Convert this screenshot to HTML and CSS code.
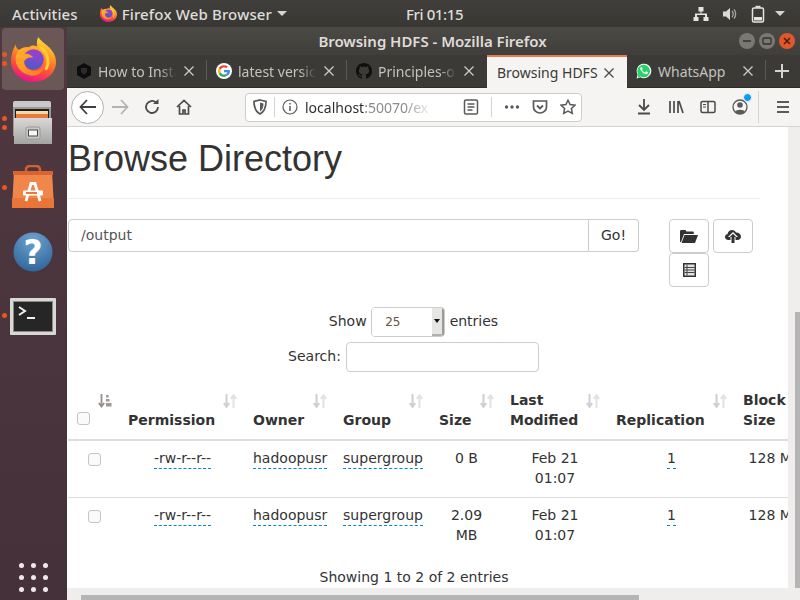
FILE: index.html
```html
<!DOCTYPE html>
<html lang="en">
<head>
<meta charset="utf-8">
<title>Browsing HDFS</title>
<link rel="stylesheet" href="styles.css">
</head>
<body>
<svg class="defs" width="0" height="0" aria-hidden="true">
  <defs>
    <linearGradient id="ffBody" x1="0.75" y1="0" x2="0.42" y2="1">
      <stop offset="0" stop-color="#ffe23c"/><stop offset="0.38" stop-color="#ff9a20"/><stop offset="0.72" stop-color="#ff4a3e"/><stop offset="1" stop-color="#e4178c"/>
    </linearGradient>
    <linearGradient id="ffGlobe" x1="0.6" y1="0" x2="0.4" y2="1">
      <stop offset="0" stop-color="#a23ccf"/><stop offset="1" stop-color="#4a5cc9"/>
    </linearGradient>
    <linearGradient id="ffFox" x1="0" y1="0" x2="1" y2="1">
      <stop offset="0" stop-color="#ffb62c"/><stop offset="1" stop-color="#ff7a22"/>
    </linearGradient>
    <symbol id="firefox" viewBox="0 0 48 48">
      <path fill="url(#ffBody)" d="M5 8C5 11 7 13 9 14 12 11 16 10 19 11 22 8 25 9 28 10 27 6 28 3 29 0 33 6 40 9 44 15 47 19 48 23 48 27 48 39 37 48 24 48 11 48 0 38 0 26 0 19 2 13 5 8Z"/>
      <path fill="none" stroke="#ffcf35" stroke-width="3" d="M31 11C39 16 42 26 37 35"/>
      <circle cx="24" cy="24" r="11" fill="url(#ffGlobe)"/>
      <path fill="url(#ffFox)" d="M8 14C12 11 17 11 21 13 17 14 15 16 14 18 18 17 22 19 24 22 19 21 15 23 14 26 14 31 18 36 25 36 30 36 33 34 35 32 33 39 27 42 21 41 10 39 4 30 5 21 6 18 7 16 8 14Z"/>
    </symbol>
    <g id="sortOff"><path d="M3.500 0v12.500M.8 9l2.700 3.800L6.200 9" fill="none" stroke="#cfcfcf" stroke-width="2"/><path d="M10.500 14V1.500M7.800 5l2.700-3.800L13.200 5" fill="none" stroke="#e2e2e2" stroke-width="2"/></g>
  </defs>
</svg>
<header class="topbar">
  <span class="top-item activities">Activities</span>
  <svg class="top-ff" width="17" height="17"><use href="#firefox"/></svg>
  <span class="top-item app-name">Firefox Web Browser</span>
  <span class="caret"></span>
  <span class="clock">Fri 01:15</span>
  <div class="status">
    <svg width="16" height="16" viewBox="0 0 16 16" fill="#e6e4e0"><path d="M5.500 1h5v4.500h-2V7.500H14V11h1.500v4h-5v-4H12V9H4v2h1.500v4h-5v-4H2V7.500h5.500V5.500h-2z"/></svg>
    <svg width="16" height="16" viewBox="0 0 16 16" fill="#dcdad6"><path d="M1 5.500h3L8 2v12L4 10.500H1z"/><path fill="none" stroke="#a9a7a3" stroke-width="1.300" d="M10 5c1.400 1.700 1.400 4.300 0 6M12 3.500c2.200 2.500 2.200 6.500 0 9"/></svg>
    <svg width="14" height="18" viewBox="0 0 14 18"><rect x="1.500" y="3" width="11" height="14" rx="1.500" fill="none" stroke="#e6e4e0" stroke-width="1.500"/><rect x="4.500" y="0.800" width="5" height="2" fill="#e6e4e0"/><rect x="3" y="12" width="8" height="3.500" fill="#e6e4e0"/></svg>
    <span class="caret"></span>
  </div>
</header>
<div class="desktop">
  <nav class="dock">
    <div class="dock-item dock-active">
      <span class="dot dot-a"></span><span class="dot dot-b"></span>
      <svg width="45" height="45"><use href="#firefox"/></svg>
    </div>
    <div class="dock-item dock-files">
      <span class="dot dot-a"></span><span class="dot dot-b"></span>
      <svg width="40" height="43" viewBox="0 0 40 43">
        <defs><linearGradient id="cabFront" x1="0" y1="0" x2="0" y2="1"><stop offset="0" stop-color="#d8d8d6"/><stop offset="1" stop-color="#a4a4a2"/></linearGradient></defs>
        <path d="M1 2C1 1 2 0 3 0H37C38 0 39 1 39 2V35H1Z" fill="#9a9a98"/>
        <path d="M1 2C1 1 2 0 3 0H37C38 0 39 1 39 2V6H1Z" fill="#c9c9c7"/>
        <rect x="3" y="8" width="34" height="10" fill="#1f1d1b"/>
        <rect x="4" y="10" width="32" height="3" fill="#f6d9a8"/>
        <rect x="4" y="13" width="32" height="5" fill="#ea7a3c"/>
        <rect x="2" y="17" width="38" height="26" fill="url(#cabFront)"/>
        <rect x="14" y="26" width="14" height="12" rx="2" fill="#c8c8c6" stroke="#9a9a98"/>
        <rect x="16.500" y="29" width="9" height="6" fill="#f6f6f4" stroke="#4a4a48"/>
      </svg>
    </div>
    <div class="dock-item dock-bag">
      <span class="dot dot-a"></span>
      <svg width="42" height="43" viewBox="0 0 42 43">
        <path d="M14 10V5C14 2 16 1 18 1H24C26 1 28 2 28 5V10" fill="none" stroke="#d4602f" stroke-width="2.500"/>
        <path d="M2 6H40L42 43H0Z" fill="#f0864a"/>
        <rect x="1" y="6" width="40" height="4" fill="#d9642e"/>
        <rect x="0" y="33" width="42" height="10" fill="#e97638"/>
        <path d="M14 36L19 18.500H23L28 36" fill="none" stroke="#fff" stroke-width="2.800"/>
        <rect x="11" y="25.500" width="20" height="5" rx="1" fill="#fff"/>
        <rect x="14" y="27" width="11" height="2" fill="#e9793e"/>
      </svg>
    </div>
    <div class="dock-item dock-help">
      <svg width="40" height="40" viewBox="0 0 40 40">
        <defs><radialGradient id="helpBlue" cx="0.5" cy="0.2" r="0.9"><stop offset="0" stop-color="#6ea3cf"/><stop offset="1" stop-color="#2a5f96"/></radialGradient></defs>
        <circle cx="20" cy="20" r="19.500" fill="url(#helpBlue)"/>
        <text class="help-mark" x="20" y="32" text-anchor="middle">?</text>
      </svg>
    </div>
    <div class="dock-item dock-term">
      <span class="dot dot-a"></span>
      <svg width="46" height="37" viewBox="0 0 46 37">
        <rect width="46" height="37" rx="1" fill="#d8d8d4"/>
        <rect x="3" y="3" width="40" height="31" fill="#8a8a88"/>
        <rect x="4" y="4" width="38" height="29" fill="#262626"/>
        <path d="M9 9l6 4-6 4" fill="none" stroke="#f0f0ee" stroke-width="2"/>
        <path d="M17 20h8" stroke="#f0f0ee" stroke-width="2"/>
      </svg>
    </div>
    <div class="app-grid">
      <i></i><i></i><i></i><i></i><i></i><i></i><i></i><i></i><i></i>
    </div>
  </nav>
  <main class="window">
    <div class="titlebar">
      <span class="title-text">Browsing HDFS - Mozilla Firefox</span>
      <div class="wm">
        <span class="wm-btn"><svg width="10" height="10" viewBox="0 0 10 10"><path d="M1 5h8" stroke="#34322e" stroke-width="1.500"/></svg></span>
        <span class="wm-btn"><svg width="10" height="10" viewBox="0 0 10 10"><rect x="1" y="2" width="8" height="6" rx="1" fill="none" stroke="#34322e" stroke-width="1.300"/></svg></span>
        <span class="wm-btn wm-close"><svg width="10" height="10" viewBox="0 0 10 10"><path d="M2 2l6 6M8 2l-6 6" stroke="#4a1d0c" stroke-width="1.500"/></svg></span>
      </div>
    </div>
    <div class="tabs">
      <div class="tab">
        <svg class="fav" width="16" height="16" viewBox="0 0 16 16"><path d="M8 0l7 4v8l-7 4-7-4V4z" fill="#0d0d0d"/><path d="M5 5h6v4l-3 3-3-3z" fill="#2b2b2b"/></svg>
        <span class="tab-label fade">How to Insta</span>
        <svg class="x" width="10" height="10" viewBox="0 0 10 10"><path d="M.5.500l9 9M9.500.500l-9 9"/></svg>
      </div>
      <div class="tab">
        <svg class="fav" width="16" height="16" viewBox="0 0 16 16"><circle cx="8" cy="8" r="8" fill="#fff"/><g transform="translate(-2.400 -2.400) scale(1.300)"><path d="M8 3.500a4.500 4.500 0 0 1 3 1.100l-1.200 1.200A2.800 2.800 0 0 0 5.400 7L3.900 5.900A4.500 4.500 0 0 1 8 3.500z" fill="#ea4335"/><path d="M3.900 5.900L5.400 7a2.800 2.800 0 0 0 0 2L3.900 10.100a4.500 4.500 0 0 1 0-4.200z" fill="#fbbc05"/><path d="M3.900 10.100L5.400 9a2.800 2.800 0 0 0 4 1.400l1.400 1.100A4.500 4.500 0 0 1 3.900 10.100z" fill="#34a853"/><path d="M12.500 7.200H8v1.700h2.600a2.200 2.200 0 0 1-1.200 1.500l1.400 1.100a4.500 4.500 0 0 0 1.700-4.300z" fill="#4285f4"/></g></svg>
        <span class="tab-label fade">latest versio</span>
        <svg class="x" width="10" height="10" viewBox="0 0 10 10"><path d="M.5.500l9 9M9.500.500l-9 9"/></svg>
      </div>
      <div class="tab">
        <svg class="fav" width="16" height="16" viewBox="0 0 16 16"><path fill="#0f0f0f" d="M8 0C3.580 0 0 3.580 0 8c0 3.540 2.290 6.530 5.470 7.590.4.070.55-.17.55-.38 0-.19-.01-.82-.01-1.490-2.010.37-2.530-.49-2.690-.94-.09-.23-.48-.94-.82-1.130-.28-.15-.68-.52-.01-.53.630-.01 1.080.58 1.230.82.720 1.210 1.870.87 2.330.66.070-.52.280-.87.510-1.070-1.780-.2-3.640-.89-3.640-3.950 0-.87.310-1.590.820-2.150-.08-.2-.36-1.020.08-2.120 0 0 .67-.21 2.200.82.640-.18 1.320-.27 2-.27s1.360.09 2 .27c1.530-1.040 2.200-.82 2.200-.82.440 1.100.160 1.920.080 2.120.51.560.82 1.270.82 2.150 0 3.070-1.870 3.750-3.650 3.950.29.250.54.730.54 1.480 0 1.070-.01 1.930-.01 2.200 0 .21.150.46.550.38A8.010 8.010 0 0 0 16 8c0-4.420-3.580-8-8-8z"/></svg>
        <span class="tab-label fade">Principles-o</span>
        <svg class="x" width="10" height="10" viewBox="0 0 10 10"><path d="M.5.500l9 9M9.500.500l-9 9"/></svg>
      </div>
      <div class="tab tab-active">
        <span class="tab-label">Browsing HDFS</span>
        <svg class="x" width="10" height="10" viewBox="0 0 10 10"><path d="M.5.500l9 9M9.500.500l-9 9"/></svg>
      </div>
      <div class="tab tab-last">
        <svg class="fav" width="16" height="16" viewBox="0 0 16 16"><path d="M.5 15.500l1.100-4A7.300 7.300 0 1 1 4.400 14.300z" fill="#fff"/><path d="M1.600 14.400l.8-2.900A6.300 6.300 0 1 1 4.700 13.600z" fill="#25d366"/><path d="M6 4.500c-.3-.6-.5-.6-.8-.6-.6 0-1.400.7-1.400 1.900 0 1.600 1.200 3.100 1.400 3.300.2.300 2.300 3.500 5.500 4 1.500.2 2.500-.7 2.700-1.500.1-.6.100-1 0-1.100-.1-.2-1.700-.9-2-1-.3-.1-.4 0-.6.200l-.8 1c-.2.100-.3.200-.6.100-1.500-.7-2.600-1.700-3.300-3-.1-.2 0-.4.100-.5l.5-.7c.1-.2.100-.3 0-.5z" fill="#fff" transform="translate(1.200 .8) scale(.8)"/></svg>
        <span class="tab-label">WhatsApp</span>
        <svg class="x" width="10" height="10" viewBox="0 0 10 10"><path d="M.5.500l9 9M9.500.500l-9 9"/></svg>
      </div>
      <svg class="plus" width="14" height="14" viewBox="0 0 14 14"><path d="M7 0v14M0 7h14" stroke="#d6d4d0" stroke-width="2"/></svg>
    </div>
    <div class="navbar">
      <span class="back"><svg width="18" height="16" viewBox="0 0 18 16"><path d="M8 1L1.500 8 8 15M2 8h15" fill="none" stroke="#3f3f3f" stroke-width="1.800"/></svg></span>
      <span class="nav-btn"><svg width="18" height="16" viewBox="0 0 18 16"><path d="M10 1l6.500 7L10 15M16 8H1" fill="none" stroke="#b3b3b1" stroke-width="1.800"/></svg></span>
      <span class="nav-btn"><svg width="16" height="16" viewBox="0 0 16 16"><path d="M14 8a6 6 0 1 1-2-4.500" fill="none" stroke="#4a4a48" stroke-width="1.800"/><path d="M9 5h5.500V0z" fill="#4a4a48"/></svg></span>
      <span class="nav-btn"><svg width="16" height="16" viewBox="0 0 16 16"><path d="M1 8l7-6.500L15 8M3.500 7v8h3.500v-4h2v4h3.500V7" fill="none" stroke="#4a4a48" stroke-width="1.700"/></svg></span>
      <div class="urlbar">
        <svg width="16" height="16" viewBox="0 0 16 16"><path d="M8 1l6 1.500c0 6-1.500 10-6 12.500C3.500 12.500 2 8.500 2 2.500z" fill="none" stroke="#5a5a58" stroke-width="1.700"/><path d="M8 3.500l3.500.9C11.500 8 10.500 10.500 8 12.500z" fill="#5a5a58"/></svg>
        <span class="url-sep"></span>
        <svg class="url-info" width="16" height="16" viewBox="0 0 16 16"><circle cx="8" cy="8" r="7" fill="none" stroke="#5a5a58" stroke-width="1.200"/><path d="M8 7v5M8 4v1.600" stroke="#5a5a58" stroke-width="1.500"/></svg>
        <span class="url-text fade-url"><b>localhost</b>:50070/ex</span>
        <svg class="url-reader" width="16" height="16" viewBox="0 0 16 16"><rect x="1.500" y="1" width="13" height="14" rx="1.500" fill="none" stroke="#5a5a58" stroke-width="1.500"/><path d="M4.500 5h7M4.500 8h7M4.500 11h5" stroke="#5a5a58" stroke-width="1.300"/></svg>
        <span class="url-sep url-sep2"></span>
        <svg class="url-icon" width="16" height="16" viewBox="0 0 16 16" fill="#5a5a58"><circle cx="2.500" cy="8" r="1.700"/><circle cx="8" cy="8" r="1.700"/><circle cx="13.500" cy="8" r="1.700"/></svg>
        <svg class="url-icon" width="16" height="16" viewBox="0 0 16 16"><path d="M1.500 2h13v6a6.500 6 0 0 1-13 0z" fill="none" stroke="#5a5a58" stroke-width="1.700"/><path d="M5 6.500L8 9.500l3-3" fill="none" stroke="#5a5a58" stroke-width="1.800"/></svg>
        <svg class="url-icon" width="16" height="16" viewBox="0 0 16 16"><path d="M8 1.200l2.100 4.400 4.800.6-3.500 3.300.9 4.800L8 12l-4.300 2.300.9-4.800L1.100 6.200l4.800-.6z" fill="none" stroke="#5a5a58" stroke-width="1.500"/></svg>
      </div>
      <span class="nav-btn nav-first"><svg width="16" height="16" viewBox="0 0 16 16"><path d="M8 0v10M3 6l5 5 5-5M2 14.500h12" fill="none" stroke="#4a4a48" stroke-width="1.800"/></svg></span>
      <span class="nav-btn"><svg width="16" height="16" viewBox="0 0 16 16"><path d="M2 2v12M6 2v12M10 2v12M11 2l4 12" fill="none" stroke="#4a4a48" stroke-width="1.700"/></svg></span>
      <span class="nav-btn"><svg width="16" height="16" viewBox="0 0 16 16"><rect x="1" y="2.500" width="14" height="11" rx="1.500" fill="none" stroke="#4a4a48" stroke-width="1.500"/><path d="M8 3v10" stroke="#4a4a48" stroke-width="1.500"/><path d="M3 5.500h3M3 8h3" stroke="#4a4a48" stroke-width="1.200"/></svg></span>
      <span class="nav-btn account"><svg width="16" height="16" viewBox="0 0 16 16"><circle cx="8" cy="8" r="7" fill="none" stroke="#5a5a58" stroke-width="1.300"/><circle cx="8" cy="6" r="2.800" fill="#5a5a58"/><path d="M3 13c1-3 9-3 10 0-2 2.500-8 2.500-10 0z" fill="#5a5a58"/></svg><span class="badge"></span></span>
      <span class="nav-sep"></span>
      <span class="nav-btn"><svg width="16" height="14" viewBox="0 0 16 14"><path d="M2 2h12M2 7h12M2 12h12" stroke="#5a5a58" stroke-width="2"/></svg></span>
    </div>
    <div class="viewport">
      <div class="page-scroll">
        <div class="page">
          <div class="page-header"><h1>Browse Directory</h1></div>
          <div class="toolbar">
            <div class="input-group">
              <input class="path-input" type="text" value="/output">
              <button class="go" type="button">Go!</button>
            </div>
            <div class="tools">
              <button class="tool" type="button"><svg width="18" height="14" viewBox="0 0 18 14" fill="#333"><path d="M0 13V2.500C0 1.500.5 1 1.500 1h4l1 1.500h6c1 0 1.300.5 1.300 1V5H4L1 13z"/><path d="M4.500 6H18l-3 8H1.500z"/></svg></button>
              <button class="tool" type="button"><svg width="16" height="14" viewBox="0 0 16 14" fill="#333"><path d="M3.500 11C1.500 11 0 9.700 0 8c0-1.500 1-2.600 2.500-3C3 2.500 5 1 7 1c1.800 0 3.300 1 4 2.500 2.700-.2 5 1.700 5 4.200 0 1.800-1.500 3.300-3.500 3.300H10.500V8H13L8 3 3 8h2.500v3z"/><path d="M6.500 14V8H4.800L8 4.700 11.200 8H9.500v6z"/></svg></button>
              <button class="tool" type="button"><svg width="13" height="14" viewBox="0 0 13 14"><rect width="13" height="14" fill="#333"/><rect x="1.500" y="1.500" width="10" height="11" fill="#e4e4e4"/><path d="M1.500 4.500h10M1.500 7h10M1.500 9.500h10M4 1.500v11" stroke="#444"/></svg></button>
            </div>
          </div>
          <div class="length-row">
            <label class="length-label show-label">Show
              <span class="select-wrap"><select class="length-select"><option>25</option></select><span class="select-arrow"></span></span>
              entries</label>
          </div>
          <div class="search-row"><label class="length-label search-label">Search: <input class="search-input" type="text"></label></div>
          <table class="files">
            <colgroup><col class="c1"><col class="c2"><col class="c3"><col class="c4"><col class="c5"><col class="c6"><col class="c7"><col class="c8"></colgroup>
            <thead>
              <tr>
                <th class="check-head"><span class="cb"></span><svg class="sort sort-on" width="14" height="14" viewBox="0 0 14 14"><path d="M3.500 0v12M.8 9l2.700 3.500L6.200 9" fill="none" stroke="#9a8f88" stroke-width="1.800"/><path d="M8 1h2.500v2.500H8zM8 5h3.500v2.500H8zM8 9h5.500v3.500H8z" fill="#9a9a98"/></svg></th>
                <th>Permission<svg class="sort" width="14" height="14" viewBox="0 0 14 14"><use href="#sortOff"/></svg></th>
                <th>Owner<svg class="sort" width="14" height="14" viewBox="0 0 14 14"><use href="#sortOff"/></svg></th>
                <th>Group<svg class="sort" width="14" height="14" viewBox="0 0 14 14"><use href="#sortOff"/></svg></th>
                <th>Size<svg class="sort" width="14" height="14" viewBox="0 0 14 14"><use href="#sortOff"/></svg></th>
                <th>Last Modified<svg class="sort" width="14" height="14" viewBox="0 0 14 14"><use href="#sortOff"/></svg></th>
                <th>Replication<svg class="sort" width="14" height="14" viewBox="0 0 14 14"><use href="#sortOff"/></svg></th>
                <th>Block Size</th>
              </tr>
            </thead>
            <tbody>
              <tr>
                <td class="check-cell"><span class="cb"></span></td>
                <td><span class="editable">-rw-r--r--</span></td>
                <td><span class="editable">hadoopusr</span></td>
                <td><span class="editable">supergroup</span></td>
                <td>0 B</td>
                <td>Feb 21 01:07</td>
                <td><span class="editable">1</span></td>
                <td>128 MB</td>
              </tr>
              <tr>
                <td class="check-cell"><span class="cb"></span></td>
                <td><span class="editable">-rw-r--r--</span></td>
                <td><span class="editable">hadoopusr</span></td>
                <td><span class="editable">supergroup</span></td>
                <td>2.09 MB</td>
                <td>Feb 21 01:07</td>
                <td><span class="editable">1</span></td>
                <td>128 MB</td>
              </tr>
            </tbody>
          </table>
          <div class="info">Showing 1 to 2 of 2 entries</div>
        </div>
      </div>
      <div class="vscroll"><span class="vthumb"></span></div>
      <div class="hscroll"><span class="hthumb"></span></div>
    </div>
  </main>
</div>
</body>
</html>
```
FILE: styles.css
```css
* { box-sizing: border-box; }
html, body { margin: 0; height: 100%; overflow: hidden; }
body { width: 800px; height: 600px; display: flex; flex-direction: column; font-family: "DejaVu Sans", sans-serif; color: #333; font-size: 14px; background: #fff; }
.defs { position: absolute; }

.topbar { height: 27px; flex: none; display: flex; align-items: center; padding-left: 12px; background: linear-gradient(#403f3b, #383733); color: #dfddd9; font-family: "Noto Sans", sans-serif; font-size: 15px; font-weight: 500; }
.top-item { white-space: nowrap; }
.activities { margin-right: 22px; letter-spacing: .1px; }
.app-name { letter-spacing: .15px; }
.top-ff { margin-right: 5px; }
.caret { display: inline-block; width: 0; height: 0; border-left: 5px solid transparent; border-right: 5px solid transparent; border-top: 5px solid #d8d6d2; margin-left: 5px; }
.clock { margin-left: 119px; white-space: nowrap; letter-spacing: -.4px; }
.status { margin-left: auto; display: flex; align-items: center; gap: 13px; padding-right: 15px; }
.status .caret { margin-left: -3px; }

.desktop { flex: 1; display: flex; min-height: 0; }
.dock { width: 67px; flex: none; background: linear-gradient(#503840, #45313a); display: flex; flex-direction: column; align-items: center; padding: 1px 0 8px; }
.dock-item { width: 62px; height: 62px; border-radius: 4px; display: flex; align-items: center; justify-content: center; position: relative; align-self: flex-start; margin-left: 2px; }
.dock-active { background: #6a5856; }
.dot { position: absolute; left: 0; width: 5px; height: 5px; border-radius: 50%; background: #e9561f; }
.dock-active .dot-a { top: 24px; left: 0; }
.dock-active .dot-b { top: 33px; left: 0; }
.dock-active svg { margin-left: 1px; }
.dock-files { height: 43px; margin-top: 11px; }
.dock-files svg { margin-right: 2px; }
.dock-files .dot-a { top: 15px; }
.dock-files .dot-b { top: 24px; }
.dock-bag { margin-top: 21px; height: 43px; }
.dock-bag .dot-a { top: 20px; }
.dock-help { margin-top: 24px; height: 40px; }
.help-mark { font-family: "DejaVu Sans", sans-serif; font-size: 33px; font-weight: 700; fill: #fff; }
.dock-term { margin-top: 26px; height: 37px; }
.dock-term .dot-a { top: 15px; }
.app-grid { margin-top: auto; display: grid; grid-template-columns: repeat(3, 5px); gap: 7px; }
.app-grid i { width: 5px; height: 5px; border-radius: 50%; background: #efeaea; }

.window { flex: 1; min-width: 0; display: flex; flex-direction: column; }
.titlebar { height: 28px; flex: none; display: flex; align-items: center; justify-content: center; position: relative; background: linear-gradient(#4c4a45, #403e3a); font-family: "Noto Sans", sans-serif; font-weight: 600; font-size: 15px; color: #dfdcd8; }
.title-text { margin-right: 2px; letter-spacing: -.03px; }
.wm { position: absolute; right: 0; top: 0; height: 100%; display: flex; align-items: center; gap: 4px; padding-right: 5px; }
.wm-btn { width: 16px; height: 16px; border-radius: 50%; background: #7a7873; display: flex; align-items: center; justify-content: center; }
.wm-close { background: #e0582a; }

.tabs { height: 33px; flex: none; display: flex; background: #3b3a36; font-family: "Noto Sans", sans-serif; font-size: 14px; color: #c5c2bd; align-items: stretch; border-bottom: 1px solid #2e2d2a; }
.tab { width: 140px; flex: none; display: flex; align-items: center; padding: 0 13px 0 9px; position: relative; }
.tab::after { content: ""; position: absolute; right: 0; top: 5px; bottom: 7px; width: 1px; background: #5c5a56; }
.tab-last { width: 139px; }
.fav { flex: none; margin-right: 6px; }
.tab-label { flex: 1; min-width: 0; white-space: nowrap; }
.fade { -webkit-mask-image: linear-gradient(to right, #000 80%, transparent 100%); mask-image: linear-gradient(to right, #000 80%, transparent 100%); }
.fade-url { -webkit-mask-image: linear-gradient(to right, #000 78%, transparent 100%); mask-image: linear-gradient(to right, #000 78%, transparent 100%); }
.x { flex: none; margin-left: 8px; }
.x path { fill: none; stroke: #cfccc7; stroke-width: 1.300; }
.tab-active { background: #f5f4f3; color: #3b3a36; border-top: 2px solid #e9794f; margin-bottom: -1px; padding-left: 10px; }
.tab-active .x path { stroke: #4a4a48; }
.tab-active::after, .tab:nth-child(3)::after { display: none; }
.plus { align-self: center; margin-left: 9px; }

.navbar { height: 39px; flex: none; display: flex; align-items: center; padding-left: 4px; background: #f5f4f3; border-bottom: 1px solid #d5d3d0; }
.back { width: 33px; height: 33px; border: 1px solid #b1b0ae; border-radius: 50%; background: #fff; display: flex; align-items: center; justify-content: center; flex: none; }
.nav-btn { width: 32px; height: 32px; flex: none; display: flex; align-items: center; justify-content: center; position: relative; }
.urlbar { width: 337px; height: 29px; margin-left: 45px; flex: none; background: #fff; border: 1px solid #cfcdca; border-radius: 4px; display: flex; align-items: center; padding-left: 6px; font-family: "Noto Sans", sans-serif; font-size: 14px; color: #8b8b8b; }
.url-sep { width: 1px; height: 20px; background: #d5d3d0; margin-left: 6px; flex: none; }
.url-info { margin-left: 7px; flex: none; }
.url-text { margin-left: 7px; width: 128px; white-space: nowrap; flex: none; }
.url-text b { font-weight: 400; color: #2e2e2e; }
.url-reader { margin-left: 30px; flex: none; }
.url-sep2 { margin-left: 12px; }
.url-icon { margin-left: 12px; flex: none; }
.nav-first { margin-left: 46px; }
.badge { position: absolute; right: 4px; top: 2px; width: 7px; height: 7px; border-radius: 50%; background: #0a9af0; border: 1px solid #f5f4f3; box-sizing: content-box; }
.nav-sep { width: 1px; height: 32px; background: #d5d3d0; margin: 0 8px 0 2px; flex: none; }

.viewport { flex: 1; min-height: 0; display: grid; grid-template-columns: 1fr 12px; grid-template-rows: 1fr 12px; background: #f0eeec; }
.page-scroll { overflow: hidden; background: #fff; padding-left: 1px; min-width: 0; min-height: 0; }
.vscroll { display: flex; justify-content: flex-end; padding-top: 185px; }
.vthumb { width: 5px; height: 276px; background: #b5b5b5; }
.hscroll { display: flex; align-items: flex-end; padding-left: 14px; grid-column: 1 / span 2; }
.hthumb { width: 558px; height: 5px; background: #b5b5b5; }

.page { width: 692px; }
.page-header { padding-top: 12px; padding-bottom: 9px; margin-bottom: 20px; border-bottom: 1px solid #eee; }
h1 { margin: 0 0 10px; font-family: "Liberation Sans", Arial, sans-serif; font-size: 36px; font-weight: 400; line-height: 40px; color: #333; }
.toolbar { display: flex; gap: 30px; align-items: flex-start; }
.input-group { display: flex; width: 571px; height: 33px; flex: none; }
.path-input { flex: 1; min-width: 0; border: 1px solid #ccc; border-radius: 4px 0 0 4px; padding: 0 12px 2px; font: 14px "DejaVu Sans", sans-serif; color: #555; background: #fff; outline: none; }
.go { width: 50px; border: 1px solid #ccc; border-left: 0; border-radius: 0 4px 4px 0; background: #fff; font: 14px "DejaVu Sans", sans-serif; color: #333; padding: 0 0 2px; }
.tools { width: 84px; display: flex; flex-wrap: wrap; column-gap: 4px; flex: none; }
.tool { width: 40px; height: 34px; background: #fff; border: 1px solid #ccc; border-radius: 4px; padding: 0; display: flex; align-items: center; justify-content: center; }
.length-row { text-align: center; margin-top: 20px; height: 30px; }
.length-label { display: inline-flex; align-items: flex-start; gap: 4.500px; height: 30px; line-height: 28px; font-size: 14px; color: #333; }
.show-label { margin-right: 1px; }
.search-label { gap: 5px; margin-right: 1px; }
.select-wrap { display: inline-flex; width: 74px; height: 30px; border: 1px solid #ccc; border-radius: 4px; background: #fff; overflow: hidden; }
.length-select { flex: 1; min-width: 0; appearance: none; -webkit-appearance: none; border: 0; background: #fff; padding-left: 13px; font: 12px "DejaVu Sans", sans-serif; color: #6b5340; outline: none; }
.select-arrow { width: 12px; background: #e6e6e4; border-right: 2px solid #9a9a98; border-bottom: 2px solid #b0b0ae; display: flex; align-items: center; justify-content: center; }
.select-arrow::before { content: ""; border-left: 3px solid transparent; border-right: 3px solid transparent; border-top: 4px solid #111; }
.search-row { text-align: center; margin-top: 5px; height: 30px; }
.search-input { width: 193px; height: 30px; border: 1px solid #ccc; border-radius: 4px; outline: none; background: #fff; }

.files { width: 747px; table-layout: fixed; border-collapse: collapse; margin-top: 10px; }
.c1 { width: 52px; } .c2 { width: 125px; } .c3 { width: 90px; } .c4 { width: 96px; } .c5 { width: 71px; } .c6 { width: 106px; } .c7 { width: 127px; } .c8 { width: 80px; }
th { position: relative; padding: 7px 8px 9px; line-height: 20px; height: 58px; text-align: left; vertical-align: bottom; font-weight: 700; border-bottom: 2px solid #ddd; color: #333; }
.sort { position: absolute; right: 8px; top: 12px; }
.check-head .cb { display: block; margin: 0 0 5px 1px; }
.sort-on { right: 8px; }
td { padding: 7px 8px 9px; line-height: 20px; text-align: center; vertical-align: top; border-bottom: 1px solid #ddd; height: 57px; }
tbody tr:last-child td { border-bottom: 0; }
.check-cell { text-align: right; padding: 9px 19px 0 8px; }
.cb { display: inline-block; width: 13px; height: 13px; border: 1px solid #c4c4c4; border-radius: 3px; background: #fafafa; vertical-align: -1px; }
.editable { border-bottom: 1px dashed #08c; display: inline-block; line-height: 19px; }
.info { text-align: center; margin-top: 12px; line-height: 20px; }
```
